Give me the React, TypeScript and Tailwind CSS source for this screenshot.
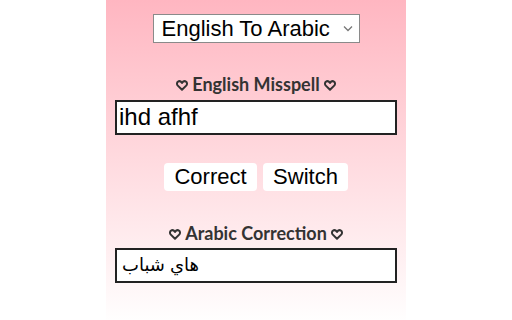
function Heart() {
  return (
    <svg width="12" height="11" viewBox="0 0 12 11" className="mt-[2px]">
      <path
        d="M6 9.8 L1.8 5.6 C0.6 4.4 0.8 2.3 2 1.6 C3.2 0.8 4.8 1.2 6 2.9 C7.2 1.2 8.8 0.8 10 1.6 C11.2 2.3 11.4 4.4 10.2 5.6 Z"
        fill="none"
        stroke="#333"
        strokeWidth="2"
        strokeLinejoin="round"
      />
    </svg>
  );
}

export default function App() {
  return (
    <div className="flex h-[320px] w-[512px] justify-center bg-white">
      <div className="flex h-full w-[300px] flex-col items-center bg-gradient-to-b from-[#ffb6c1] to-[#fffefe] pt-[14px]">
        <div className="relative h-[29px] w-[207px] border border-[#8a8a8a] bg-white font-['Liberation_Sans',sans-serif] text-[22px] leading-[27px] text-black">
          <span className="pl-[8px]">English To Arabic</span>
          <svg className="absolute right-[6px] top-[10px]" width="10" height="7" viewBox="0 0 10 7">
            <path d="M1 1.5 L5 5.5 L9 1.5" fill="none" stroke="#777" strokeWidth="1.3" />
          </svg>
        </div>

        <div className="mt-[31px] flex h-[20px] items-center gap-[4px] font-['Lato',sans-serif] text-[18px] font-bold text-[#333]">
          <Heart />
          <span>English Misspell</span>
          <Heart />
        </div>
        <div className="mt-[6px] h-[35px] w-[282px] border-2 border-[#222] bg-white px-[2px] font-['Liberation_Sans',sans-serif] text-[24px] leading-[30px] text-black">
          ihd afhf
        </div>

        <div className="mt-[28px] flex gap-[6px] font-['Liberation_Sans',sans-serif] text-[22px] text-black">
          <button className="h-[28px] w-[93px] rounded-[4px] bg-white leading-[28px]">Correct</button>
          <button className="h-[28px] w-[85px] rounded-[4px] bg-white leading-[28px]">Switch</button>
        </div>

        <div className="mt-[32px] flex h-[20px] items-center gap-[4px] font-['Lato',sans-serif] text-[18px] font-bold text-[#333]">
          <Heart />
          <span>Arabic Correction</span>
          <Heart />
        </div>
        <div className="mt-[5px] h-[35px] w-[282px] border-2 border-[#222] bg-white px-[5px] font-['Liberation_Sans','DejaVu_Sans',sans-serif] text-[18px] leading-[30px] text-black">
          هاي شباب
        </div>
      </div>
    </div>
  );
}
